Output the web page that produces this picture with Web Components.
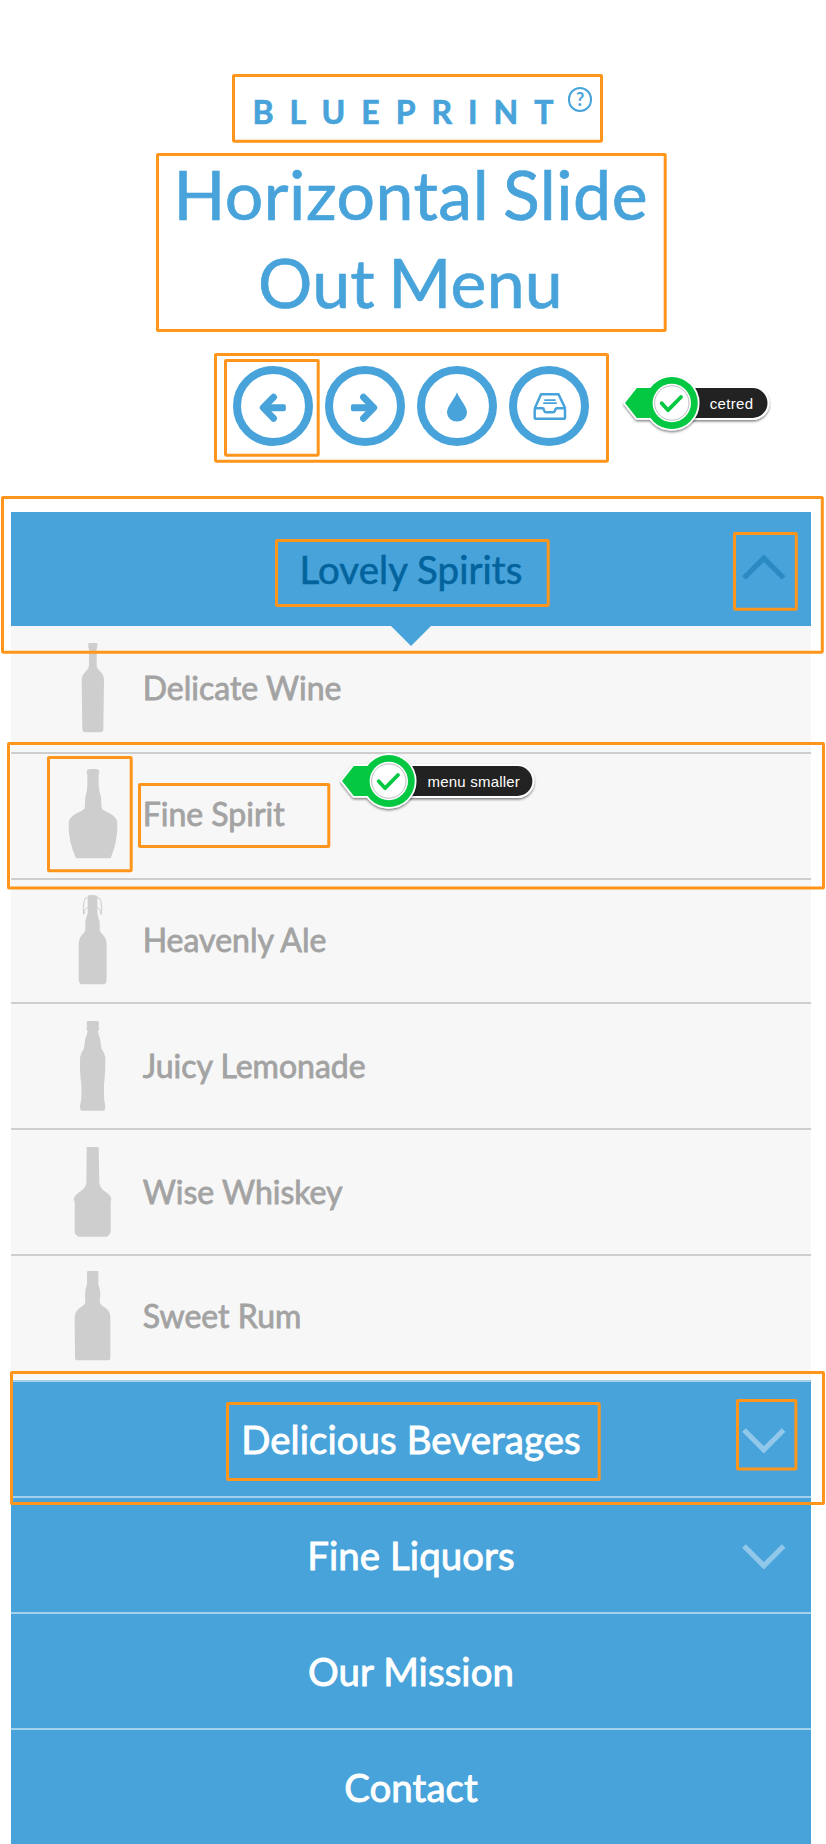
<!DOCTYPE html>
<html lang="en">
<head>
<meta charset="utf-8">
<title>Horizontal Slide Out Menu</title>
<style>
html,body{margin:0;background:#fff}
body{font-family:Lato,"Liberation Sans",sans-serif;color:#47a3da;width:826px;height:1844px;overflow:hidden}
</style>
</head>
<body>
<blueprint-page>
  <page-header slot="header">
    <span slot="brand">BLUEPRINT</span>
    <span slot="line1">Horizontal Slide</span>
    <span slot="line2">Out Menu</span>
  </page-header>
  <slide-menu slot="menu">
    <menu-entry open chevron="up">Lovely Spirits</menu-entry>
    <drink-item icon="wine" style="--h:128px;--top:17px">Delicate Wine</drink-item>
    <drink-item icon="spirit" style="--h:126px;--top:15px">Fine Spirit</drink-item>
    <drink-item icon="ale" style="--h:124px;--top:15px">Heavenly Ale</drink-item>
    <drink-item icon="lemonade" style="--h:126px;--top:17px">Juicy Lemonade</drink-item>
    <drink-item icon="whiskey" style="--h:126px;--top:17px">Wise Whiskey</drink-item>
    <drink-item icon="rum" last style="--h:124px;--top:15px">Sweet Rum</drink-item>
    <menu-entry chevron="down">Delicious Beverages</menu-entry>
    <menu-entry chevron="down">Fine Liquors</menu-entry>
    <menu-entry>Our Mission</menu-entry>
    <menu-entry>Contact</menu-entry>
  </slide-menu>
  <annotation-layer slot="notes"></annotation-layer>
</blueprint-page>
<script>
const define=(name,html)=>customElements.define(name,class extends HTMLElement{
  constructor(){super();this.attachShadow({mode:'open'})}
  connectedCallback(){const t=document.createElement('template');
    t.innerHTML=typeof html==='function'?html(this):html;
    this.shadowRoot.replaceChildren(t.content.cloneNode(true))}
});

define('blueprint-page',`<style>
:host{display:block;position:relative;width:826px;height:1844px;overflow:hidden}
</style><slot name="header"></slot><slot name="menu"></slot><slot name="notes"></slot>`);

define('page-header',`<style>
:host{display:flex;flex-direction:column;width:822px;height:512px;box-sizing:border-box;padding-top:92px}
.brand{display:flex;align-items:flex-start;height:40px;font-weight:700;font-size:32px;line-height:40px;letter-spacing:16px;padding-left:252.5px;-webkit-text-stroke:.7px currentColor}
help-badge{margin:-4.7px 0 0 -1.4px}
h1{margin:18px 0 0;font-weight:400;font-size:68px;line-height:88px;word-spacing:-4.2px;white-space:nowrap;-webkit-text-stroke:.7px currentColor}
.a,.b{display:block}
.a{letter-spacing:.5px;padding-left:173.4px}.b{letter-spacing:.2px;padding-left:258.1px}
nav{display:flex;justify-content:center;gap:12px;margin-top:40px}
</style>
<div class="brand"><slot name="brand"></slot><help-badge></help-badge></div>
<h1><span class="a"><slot name="line1"></slot></span><span class="b"><slot name="line2"></slot></span></h1>
<nav><round-button icon="left"></round-button><round-button icon="right"></round-button><round-button icon="drop"></round-button><round-button icon="tray"></round-button></nav>`);

define('help-badge',`<style>
:host{display:flex;box-sizing:border-box;width:24.3px;height:24.3px;border:2px solid #47a3da;border-radius:50%;align-items:center;justify-content:center;font:700 18px/20px Lato,sans-serif;letter-spacing:0;-webkit-text-stroke:0}
</style><span>?</span>`);

const glyphs={
left:`<g fill="none" stroke="#47a3da" stroke-width="6.8" stroke-linecap="round" stroke-linejoin="round"><path d="M40.6 31.1 30.2 41.7 40.6 52.3"/></g><rect x="31" y="38.2" width="21.8" height="7" rx="1.8" fill="#47a3da"/>`,
right:`<g fill="none" stroke="#47a3da" stroke-width="6.8" stroke-linecap="round" stroke-linejoin="round"><path d="M38.4 31.1 48.8 41.7 38.4 52.3"/></g><rect x="26" y="38.2" width="21.8" height="7" rx="1.8" fill="#47a3da"/>`,
drop:`<path fill="#47a3da" d="M40 26.3C43 34.2 50 40.2 50 46.6a10 9 0 0 1-20 0C30 40.2 37 34.2 40 26.3Z"/>`,
tray:`<g fill="none" stroke="#47a3da" stroke-width="2.5" stroke-linejoin="round"><path d="M25.8 42.2 32 28.3H49.5L56.2 42.2"/><path d="M26.8 42.3H33.6Q34.6 42.3 34.9 43.6L35.3 45Q35.7 46.3 37 46.3H44Q45.4 46.3 45.8 45L46.4 43.4Q46.8 42.3 47.8 42.3H55.2Q56 42.3 56 43.2V51.2Q56 52.8 54.4 52.8H27.3Q25.7 52.8 25.7 51.2V43.4Q25.7 42.3 26.8 42.3Z"/><path stroke-width="1.7" d="M35.3 34.2H46.7M34.2 37.2H47.8"/></g>`};
define('round-button',el=>`<style>
:host{display:block;width:80px;height:80px;box-sizing:border-box;border:8px solid #47a3da;border-radius:50%}
svg{display:block;margin:-8px;width:80px;height:80px}
</style><svg viewBox="0 0 80 80">${glyphs[el.getAttribute('icon')]}</svg>`);

define('slide-menu',`<style>
:host{display:flex;flex-direction:column;width:800px;margin-left:11px;background:#f7f7f7}
</style><slot></slot>`);

const chev={up:'M2 24 21.8 4.2 41.6 24',down:'M2 2 21.8 21.8 41.6 2'};
define('menu-entry',el=>`<style>
:host{position:relative;display:grid;grid-template-columns:1fr;align-items:center;box-sizing:border-box;height:116px;border-top:2px solid #a3d1ec;background:#47a3da;color:#fff;font-size:38.4px;line-height:46px;letter-spacing:.09px;text-align:center;-webkit-text-stroke:.9px currentColor}
:host([open]){height:114px;border-top:0;color:#02639d;-webkit-text-stroke:.6px currentColor}
:host([open])::after{content:"";position:absolute;left:380px;top:114px;border:20px solid transparent;border-top-color:#47a3da;border-bottom:0}
.t,svg{grid-area:1/1}
svg{justify-self:end;width:44px;height:28px;margin-right:25.5px;color:#91c8e9}
.up{margin-top:-3px;color:#2c8ac2}
.down{margin-top:5px}
</style><span class="t"><slot></slot></span>${el.hasAttribute('chevron')?`<svg class="${el.getAttribute('chevron')}" viewBox="0 0 44 28"><path fill="none" stroke="currentColor" stroke-width="5.2" d="${chev[el.getAttribute('chevron')]}"/></svg>`:''}`);

const bottles={
wine:'<path d="M78 0H102Q103 0 103 3V14l-2 3V70Q103 78 112 86Q123 96 123 112L121 257Q121 268 112 268H68Q58 268 58 257L56 112Q56 96 68 86Q76 78 78 70V17l-2-3V3Q76 0 78 0Z"/>',
spirit:'<path d="M72 4Q74 0 90 0T108 4L109 12 107 16V50Q109 70 114 85L116 118Q120 124 138 132Q163 145 163 162Q165 215 143 268H39Q15 215 17 162Q17 145 42 132Q62 124 65 118L67 85Q73 65 73 50V16L71 12Z"/>',
ale:'<path d="M74 3Q76 0 88 0T103 3V55Q106 70 110 80V106Q113 114 121 121Q131 132 131 150V250Q131 268 122 268H56Q47 268 47 250V150Q47 132 56 121Q64 114 67 106V80Q70 65 74 55Z"/><path fill="none" stroke="#cecece" stroke-width="3" d="M74 8Q63 8 63 20Q59 40 62 59M103 8Q113 8 114 20Q118 40 115 59M74 38Q62 40 65 56M103 38Q114 40 112 56"/>',
lemonade:'<path d="M73 0H105Q108 3 108 10L106 14 108 18V26L105 30Q106 42 112 56Q113 75 116 84Q127 100 127 115Q127 160 123 190Q123 225 124 240Q129 255 126 266L122 269H56L52 266Q49 255 54 240Q56 225 55 190Q50 160 51 115Q51 100 62 84Q65 75 66 56Q72 42 74 30L71 26V18L73 14 71 10Q71 3 73 0Z"/>',
whiskey:'<path d="M73 0H105Q107 0 107 4L109 108Q112 124 125 133Q145 146 145 156L143 166V256Q143 260 132 269H46Q35 262 35 256V166L32 156Q33 146 53 133Q68 122 70 108L71 4Q71 0 73 0Z"/>',
rum:'<path d="M74 0H104Q106 0 106 5V40Q112 58 112 70L110 92Q112 102 124 108Q142 120 142 138V262Q142 268 136 268H42Q36 268 36 262L35 138Q36 120 54 108Q67 100 67 92L66 70Q66 58 72 40V5Q72 0 74 0Z"/>'};
define('drink-item',el=>`<style>
:host{display:flex;align-items:flex-start;box-sizing:border-box;height:var(--h);padding:var(--top) 0 0 52.3px;border-bottom:2px solid #cecece;color:#a3a3a3;font-size:32px;line-height:39px;-webkit-text-stroke:.8px currentColor}
:host([last]){border-bottom:0}
svg{width:60px;height:90px;fill:#cecece}
span{margin:25px 0 0 19.4px}
</style><svg viewBox="0 0 180 270">${bottles[el.getAttribute('icon')]}</svg><span><slot></slot></span>`);

define('annotation-box',el=>{const[a,b,c,d]=el.getAttribute('bounds').split(' ').map(Number);return `<style>
:host{position:absolute;left:${a}px;top:${b}px;width:${c-a}px;height:${d-b}px}
svg{display:block;overflow:visible}
</style><svg width="${c-a}" height="${d-b}"><rect x="1.5" y="1.5" width="${c-a-3}" height="${d-b-3}" rx=".6" fill="none" stroke="#ff951b" stroke-width="3"/></svg>`});

define('check-tag',el=>{const w=+el.getAttribute('end');return `<style>
:host{position:absolute;display:block;height:60px;width:${w+8}px}
svg{position:absolute;inset:0;overflow:visible}
span{position:absolute;top:21px;color:#fff;font:15px/20px "Liberation Sans",Arial,sans-serif;letter-spacing:var(--ls,0);white-space:nowrap;left:var(--tx)}
</style><svg width="${w+8}" height="60"><defs><filter id="s" x="-10%" y="-20%" width="120%" height="150%"><feDropShadow dx="0" dy="1.5" stdDeviation="1.2" flood-color="#000" flood-opacity=".5"/></filter></defs>
<g filter="url(#s)"><path fill="#fff" stroke="#fff" stroke-width="4" stroke-linejoin="round" d="M46.8 15H${w-15}a15 15 0 0 1 0 30H46.8Z"/><path fill="#232323" d="M46.8 15H${w-15}a15 15 0 0 1 0 30H46.8Z"/></g>
<g filter="url(#s)"><g fill="#fff" stroke="#fff" stroke-width="3.4" stroke-linejoin="round"><path d="M0 30 11.8 15H46.8V45H11.8Z"/><circle cx="46.8" cy="30" r="26"/></g></g>
<path fill="#04c742" d="M0 30 11.8 15H46.8V45H11.8Z"/><circle cx="46.8" cy="30" r="26" fill="#04c742"/>
<circle cx="46.8" cy="30" r="19.2" fill="#fff"/><circle cx="46.8" cy="30" r="17.2" fill="none" stroke="#bdbdbd" stroke-width="1"/>
<path fill="none" stroke="#04c742" stroke-width="3.8" stroke-linecap="round" stroke-linejoin="round" d="M36.7 30.2 43.1 37.2 56 24"/></svg><span><slot></slot></span>`});

const boxes=['232 74 603 142.7','156.3 153 667 332','214 353 609 462.7','224.3 359.3 320 457','1 496.3 823.8 654','275.3 539 550 607','733 532 797.8 610.7','7 741.7 825 889.3','47.3 755.7 133 872','137.5 783 329.8 848','10 1371 825 1505','226.3 1402 601 1481','735.6 1399 797 1470.6'];
define('annotation-layer',`<style>
:host{position:absolute;inset:0;display:block;pointer-events:none}
.one{left:624.5px;top:373px;--tx:85.3px;--ls:.3px}
.two{left:342.3px;top:751px;--tx:85.3px;--ls:.2px}
</style>${boxes.map(b=>`<annotation-box bounds="${b}"></annotation-box>`).join('')}
<check-tag class="one" end="142.5">cetred</check-tag><check-tag class="two" end="190.4">menu smaller</check-tag>`);
</script>
</body>
</html>
